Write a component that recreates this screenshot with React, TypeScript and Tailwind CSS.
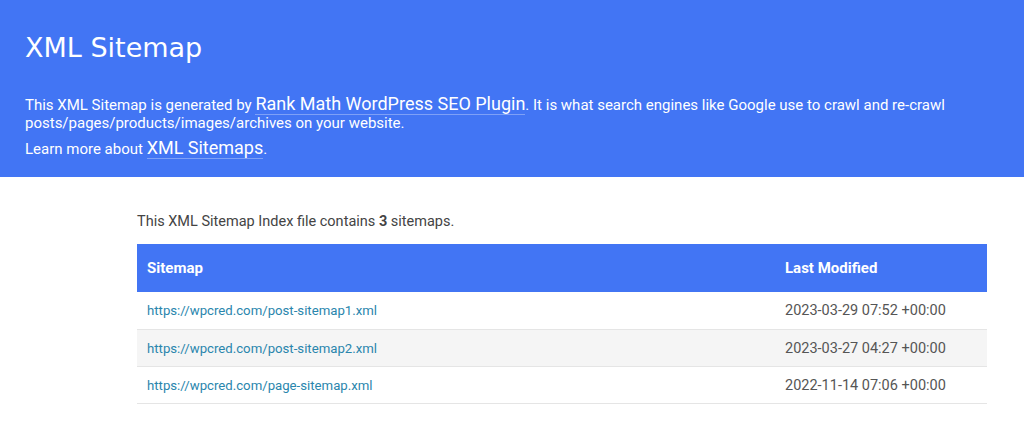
import React from "react";

const rows = [
  { url: "https://wpcred.com/post-sitemap1.xml", date: "2023-03-29 07:52 +00:00" },
  { url: "https://wpcred.com/post-sitemap2.xml", date: "2023-03-27 04:27 +00:00" },
  { url: "https://wpcred.com/page-sitemap.xml", date: "2022-11-14 07:06 +00:00" },
];

export default function App() {
  return (
    <div className="w-[1024px] h-[443px] bg-white overflow-hidden font-['Roboto',sans-serif] text-[#444]">
      <div className="bg-[#4275f4] text-white h-[177px] px-[25px] pt-[30px]">
        <h1 className="font-['DejaVu_Sans',sans-serif] text-[27px] leading-[36px] font-normal m-0">XML Sitemap</h1>
        <p className="mt-[29px] text-[15px] leading-[18px]">
          This XML Sitemap is generated by{" "}
          <a className="text-white border-b border-[#7ea0f7] text-[18px]">Rank Math WordPress SEO Plugin</a>. It is what search engines like Google use to crawl and re-crawl
          <br />
          posts/pages/products/images/archives on your website.
        </p>
        <p className="mt-[7px] text-[15px] leading-[18px]">
          Learn more about <a className="text-white border-b border-[#7ea0f7] text-[18px]">XML Sitemaps</a>.
        </p>
      </div>
      <div className="ml-[137px] w-[850px] pt-[36px]">
        <p className="text-[14.5px] leading-[18px] text-[#444] mb-[13px]">
          This XML Sitemap Index file contains <strong className="font-bold">3</strong> sitemaps.
        </p>
        <table className="w-full border-collapse text-[13.2px]">
          <thead>
            <tr className="bg-[#4275f4] text-white">
              <th className="text-left font-bold text-[15px] pl-[10px] h-[48px]">Sitemap</th>
              <th className="text-left font-bold text-[15px] pl-[10px] w-[212px]">Last Modified</th>
            </tr>
          </thead>
          <tbody>
            {rows.map((r, i) => (
              <tr key={r.url} className={`h-[37px] border-b border-[#e5e5e5] ${i === 1 ? "bg-[#f5f5f5]" : "bg-white"}`}>
                <td className="pl-[10px] pt-[2px]">
                  <a className="text-[#2a86ad]">{r.url}</a>
                </td>
                <td className="pl-[10px] pt-[2px] text-[#555] text-[14.5px]">{r.date}</td>
              </tr>
            ))}
          </tbody>
        </table>
      </div>
    </div>
  );
}
